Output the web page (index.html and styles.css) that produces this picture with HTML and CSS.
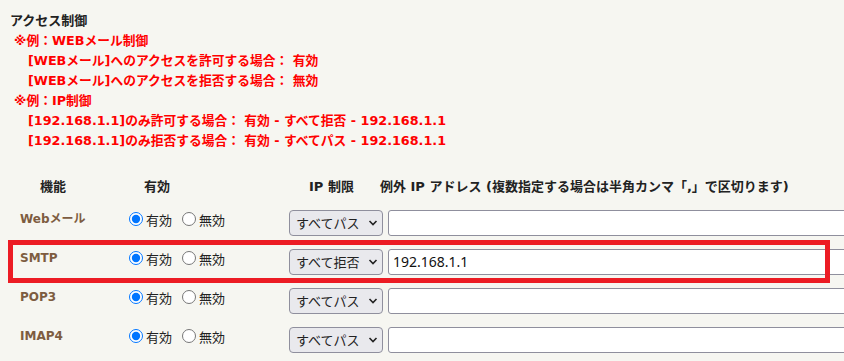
FILE: index.html
```html
<!DOCTYPE html>
<html lang="ja">
  <head>
    <meta charset="UTF-8" />
    <meta name="viewport" content="width=device-width, initial-scale=1.0" />
    <title>アクセス制御</title>
    <link rel="stylesheet" href="styles.css">
  </head>
  <body>
    <div class="page">
      <h2 class="title">アクセス制御</h2>
      <div class="note">
        <p class="note-head">※例：WEBメール制御</p>
        <p class="note-item">[WEBメール]へのアクセスを許可する場合： 有効</p>
        <p class="note-item">[WEBメール]へのアクセスを拒否する場合： 無効</p>
        <p class="note-head">※例：IP制御</p>
        <p class="note-item">[192.168.1.1]のみ許可する場合： 有効 - すべて拒否 - 192.168.1.1</p>
        <p class="note-item">[192.168.1.1]のみ拒否する場合： 有効 - すべてパス - 192.168.1.1</p>
      </div>

      <div class="acl">
        <div class="acl-head">
          <div class="h-func">機能</div>
          <div class="h-enable">有効</div>
          <div class="h-ip">IP 制限</div>
          <div class="h-except">例外 IP アドレス (複数指定する場合は半角カンマ「,」で区切ります)</div>
        </div>

        <div class="acl-row">
          <div class="func">Webメール</div>
          <div class="radios">
            <label><input type="radio" name="web" checked /><span>有効</span></label>
            <label><input type="radio" name="web" /><span>無効</span></label>
          </div>
          <div class="select-wrap">
            <select><option>すべてパス</option><option>すべて拒否</option></select>
            <svg class="chev" width="10" height="6" viewBox="0 0 10 6"><polyline points="1.5,1 5,4.5 8.5,1" fill="none" stroke="#222" stroke-width="1.6" /></svg>
          </div>
          <div class="except"><input type="text" value="" /></div>
        </div>

        <div class="acl-row marked">
          <div class="func">SMTP</div>
          <div class="radios">
            <label><input type="radio" name="smtp" checked /><span>有効</span></label>
            <label><input type="radio" name="smtp" /><span>無効</span></label>
          </div>
          <div class="select-wrap">
            <select><option>すべてパス</option><option selected>すべて拒否</option></select>
            <svg class="chev" width="10" height="6" viewBox="0 0 10 6"><polyline points="1.5,1 5,4.5 8.5,1" fill="none" stroke="#222" stroke-width="1.6" /></svg>
          </div>
          <div class="except"><input type="text" value="192.168.1.1" /></div>
          <div class="highlight"></div>
        </div>

        <div class="acl-row">
          <div class="func">POP3</div>
          <div class="radios">
            <label><input type="radio" name="pop3" checked /><span>有効</span></label>
            <label><input type="radio" name="pop3" /><span>無効</span></label>
          </div>
          <div class="select-wrap">
            <select><option>すべてパス</option><option>すべて拒否</option></select>
            <svg class="chev" width="10" height="6" viewBox="0 0 10 6"><polyline points="1.5,1 5,4.5 8.5,1" fill="none" stroke="#222" stroke-width="1.6" /></svg>
          </div>
          <div class="except"><input type="text" value="" /></div>
        </div>

        <div class="acl-row">
          <div class="func">IMAP4</div>
          <div class="radios">
            <label><input type="radio" name="imap4" checked /><span>有効</span></label>
            <label><input type="radio" name="imap4" /><span>無効</span></label>
          </div>
          <div class="select-wrap">
            <select><option>すべてパス</option><option>すべて拒否</option></select>
            <svg class="chev" width="10" height="6" viewBox="0 0 10 6"><polyline points="1.5,1 5,4.5 8.5,1" fill="none" stroke="#222" stroke-width="1.6" /></svg>
          </div>
          <div class="except"><input type="text" value="" /></div>
        </div>
      </div>
    </div>
  </body>
</html>
```

FILE: styles.css
```css
html,
body {
  overflow: hidden; /* input runs past the right edge */
}

body {
  margin: 0;
  background-color: #f6f6f1;
  font-family: "DejaVu Sans", "Noto Sans CJK JP", sans-serif;
  font-size: 13px;
  color: #222;
}

.page {
  padding: 11px 10px 0 10px;
}

.title {
  margin: 0;
  font-size: 13px;
  line-height: 20px;
  font-weight: bold;
  color: #222;
}

.note p {
  margin: 0;
  font-size: 12.75px;
  line-height: 20px;
  font-weight: bold;
  color: #ff0000;
}

.note-head {
  padding-left: 4px;
}

.note-item {
  padding-left: 18px;
  white-space: nowrap;
}

.acl {
  margin-top: 20px;
}

.acl-head,
.acl-row {
  display: grid;
  grid-template-columns: 115px 160px 99px 1fr;
}

.acl-head {
  height: 32px;
  line-height: 32px;
  font-weight: bold;
  color: #222;
  white-space: nowrap;
}

.h-func {
  padding-left: 30px;
}

.h-enable {
  padding-left: 19px;
}

.h-ip {
  padding-left: 24px;
}

.h-except {
  margin-left: -4px;
}

.acl-row {
  position: relative;
  height: 39px;
  align-items: center;
}

.func {
  align-self: start;
  padding: 8px 0 0 10px;
  line-height: 16px;
  font-size: 12px;
  font-weight: bold;
  color: #7d5c40;
}

.radios {
  align-self: start;
  padding: 8px 0 0 4px;
  display: flex;
  align-items: center;
  height: 16px;
}

.radios label {
  display: flex;
  align-items: center;
  margin-right: 10px;
  font-family: "Noto Sans CJK JP", sans-serif;
  font-size: 13px;
}

.radios input {
  margin: 0 3px 0 0;
  width: 14px;
  height: 14px;
}

.select-wrap {
  position: relative;
  padding-left: 4px;
  height: 26px;
}

.select-wrap select {
  appearance: none;
  width: 94px;
  height: 26px;
  padding: 0 0 0 6px;
  background-color: #e9e9ed;
  border: 1px solid #8f8f9d;
  border-radius: 4px;
  font-family: "Noto Sans CJK JP", sans-serif;
  font-size: 13px;
  color: #222;
}

.chev {
  position: absolute;
  left: 83px;
  top: 10px;
  pointer-events: none;
}

.except {
  height: 26px;
}

.except input {
  box-sizing: border-box;
  width: 480px;
  height: 26px;
  margin-left: 4px;
  padding: 0 4px;
  background: #fff;
  border: 1px solid #8f8f9d;
  border-radius: 3px;
  font-family: "Noto Sans", sans-serif;
  font-size: 14px;
  color: #111;
}

.highlight {
  position: absolute;
  left: -2px;
  top: -2px;
  width: 822px;
  height: 43px;
  box-sizing: border-box;
  border: 5px solid #ec1c24;
  pointer-events: none;
}
```
